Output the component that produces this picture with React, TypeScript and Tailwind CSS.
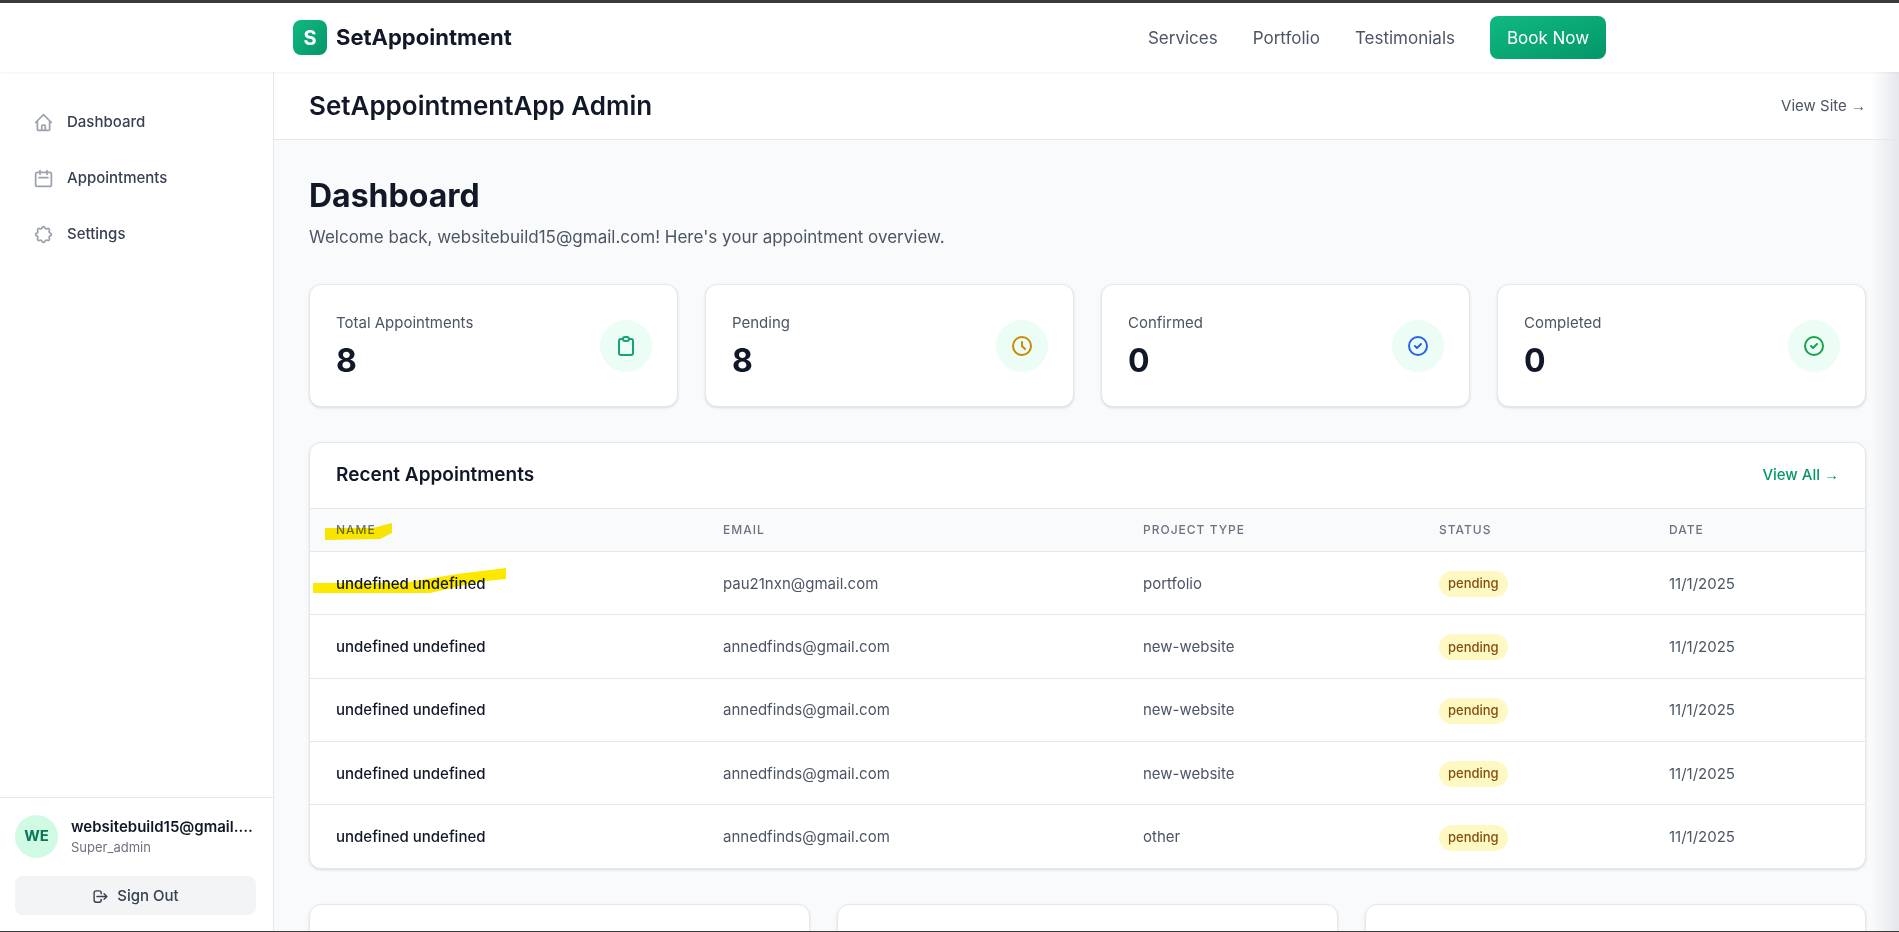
const stats = [
  { label: "Total Appointments", value: "8", icon: "clipboard", color: "text-[#16a37a]" },
  { label: "Pending", value: "8", icon: "clock", color: "text-[#ca8a04]" },
  { label: "Confirmed", value: "0", icon: "check", color: "text-[#2563eb]" },
  { label: "Completed", value: "0", icon: "check", color: "text-[#16a34a]" },
];

const rows = [
  { email: "pau21nxn@gmail.com", type: "portfolio" },
  { email: "annedfinds@gmail.com", type: "new-website" },
  { email: "annedfinds@gmail.com", type: "new-website" },
  { email: "annedfinds@gmail.com", type: "new-website" },
  { email: "annedfinds@gmail.com", type: "other" },
];

const iconPaths: Record<string, string> = {
  home: "M3 12l2-2m0 0l7-7 7 7M5 10v10a1 1 0 001 1h3m10-11l2 2m-2-2v10a1 1 0 01-1 1h-3m-6 0a1 1 0 001-1v-4a1 1 0 011-1h2a1 1 0 011 1v4a1 1 0 001 1m-6 0h6",
  calendar: "M8 7V3m8 4V3m-9 8h10M5 21h14a2 2 0 002-2V7a2 2 0 00-2-2H5a2 2 0 00-2 2v12a2 2 0 002 2z",
  gear: "M10.325 4.317c.426-1.756 2.924-1.756 3.35 0a1.724 1.724 0 002.573 1.066c1.543-.94 3.31.826 2.37 2.37a1.724 1.724 0 001.065 2.572c1.756.426 1.756 2.924 0 3.35a1.724 1.724 0 00-1.066 2.573c.94 1.543-.826 3.31-2.37 2.37a1.724 1.724 0 00-2.572 1.065c-.426 1.756-2.924 1.756-3.35 0a1.724 1.724 0 00-2.573-1.066c-1.543.94-3.31-.826-2.37-2.37a1.724 1.724 0 00-1.065-2.572c-1.756-.426-1.756-2.924 0-3.35a1.724 1.724 0 001.066-2.573c-.94-1.543.826-3.31 2.37-2.37.996.608 2.296.07 2.572-1.065z",
  logout: "M17 16l4-4m0 0l-4-4m4 4H7m6 4v1a3 3 0 01-3 3H6a3 3 0 01-3-3V7a3 3 0 013-3h4a3 3 0 013 3v1",
  clipboard: "M9 5H7a2 2 0 00-2 2v12a2 2 0 002 2h10a2 2 0 002-2V7a2 2 0 00-2-2h-2M9 5a2 2 0 002 2h2a2 2 0 002-2M9 5a2 2 0 012-2h2a2 2 0 012 2",
  clock: "M12 8v4l3 3m6-3a9 9 0 11-18 0 9 9 0 0118 0z",
  check: "M9 12l2 2 4-4m6 2a9 9 0 11-18 0 9 9 0 0118 0z",
};

function Icon({ name, size }: { name: string; size: number }) {
  return (
    <svg width={size} height={size} viewBox="0 0 24 24" fill="none" stroke="currentColor" strokeWidth="2" strokeLinecap="round" strokeLinejoin="round">
      <path d={iconPaths[name]} />
    </svg>
  );
}

function Arrow() {
  return <span className="font-['Liberation_Sans']">→</span>;
}

export default function App() {
  return (
    <div className="relative h-screen overflow-hidden flex flex-col bg-white font-['Inter',sans-serif] text-[#111827]">
      <div className="h-[3px] shrink-0 bg-[#3a3a3a]" />
      <header className="h-[69px] shrink-0 flex items-center justify-between pl-[293px] pr-[293px] bg-white shadow-[0_1px_2px_rgba(0,0,0,0.05)] z-10">
        <div className="flex items-center gap-[9px]">
          <div className="w-[34px] h-[35px] rounded-lg bg-gradient-to-br from-[#10b981] to-[#059669] flex items-center justify-center text-white font-bold text-[20px]">S</div>
          <span className="text-[22px] font-bold">SetAppointment</span>
        </div>
        <nav className="flex items-center gap-[35px] text-[17px] text-[#4b5563]">
          <span className="pt-[2px]">Services</span>
          <span className="pt-[2px]">Portfolio</span>
          <span className="pt-[2px]">Testimonials</span>
          <span className="w-[116px] h-[43px] pt-[2px] rounded-lg bg-gradient-to-br from-[#10b981] to-[#059669] text-white flex items-center justify-center">Book Now</span>
        </nav>
      </header>

      <div className="flex-1 min-h-0 flex">
        <aside className="w-[274px] shrink-0 border-r border-[#e5e7eb] flex flex-col">
          <nav className="flex-1 pt-[22px] flex flex-col text-[15px] font-medium text-[#374151]">
            {[
              { label: "Dashboard", icon: "home" },
              { label: "Appointments", icon: "calendar" },
              { label: "Settings", icon: "gear" },
            ].map((item) => (
              <div key={item.label} className="h-[56px] flex items-center gap-[13px] pl-[33px]">
                <span className="text-[#9ca3af]"><Icon name={item.icon} size={21} /></span>
                {item.label}
              </div>
            ))}
          </nav>
          <div className="h-[135px] border-t border-[#e5e7eb] pl-[15px] pr-[17px] pt-[17px]">
            <div className="flex items-center gap-[13px]">
              <div className="w-[43px] h-[43px] rounded-full bg-[#d1fae5] text-[#047857] flex items-center justify-center text-[15px] font-bold">WE</div>
              <div className="min-w-0 flex-1">
                <div className="text-[15px] font-semibold truncate">websitebuild15@gmail.com</div>
                <div className="text-[13px] text-[#6b7280]">Super_admin</div>
              </div>
            </div>
            <div className="mt-[18px] h-[39px] pt-[2px] rounded-lg bg-[#f3f4f6] text-[#374151] flex items-center justify-center gap-2 text-[15px] font-medium">
              <Icon name="logout" size={17} />
              Sign Out
            </div>
          </div>
        </aside>

        <main className="flex-1 min-w-0 bg-[#f9fafb] flex flex-col">
          <div className="h-[68px] shrink-0 bg-white border-b border-[#e5e7eb] flex items-center justify-between pl-[35px] pr-[33px]">
            <h1 className="text-[26px] font-semibold">SetAppointmentApp Admin</h1>
            <span className="pt-px text-[15px] text-[#4b5563]">View Site <Arrow /></span>
          </div>
          <div className="flex-1 min-h-0 pl-[35px] pr-[33px] pt-[36px]">
            <h2 className="text-[32px] font-bold leading-[40px]">Dashboard</h2>
            <p className="mt-[9px] text-[17px] leading-[24px] text-[#4b5563]">Welcome back, websitebuild15@gmail.com! Here's your appointment overview.</p>

            <div className="mt-[35px] grid grid-cols-4 gap-[27px]">
              {stats.map((s) => (
                <div key={s.label} className="h-[123px] rounded-xl bg-white border border-[#e5e7eb] shadow-sm flex items-center justify-between pl-[26px] pr-[25px]">
                  <div className="pt-[2px]">
                    <div className="text-[15px] leading-[20px] text-[#4b5563]">{s.label}</div>
                    <div className="mt-[8px] text-[32px] font-bold leading-[40px]">{s.value}</div>
                  </div>
                  <div className={`w-[52px] h-[52px] rounded-full bg-[#ecfdf5] flex items-center justify-center ${s.color}`}>
                    <Icon name={s.icon} size={24} />
                  </div>
                </div>
              ))}
            </div>

            <div className="mt-[35px] rounded-xl bg-white border border-[#e5e7eb] shadow-sm overflow-hidden">
              <div className="h-[65px] flex items-center justify-between px-[26px]">
                <h3 className="text-[19px] font-semibold">Recent Appointments</h3>
                <span className="text-[15px] font-medium text-[#059669]">View All <Arrow /></span>
              </div>
              <div className="h-[44px] grid grid-cols-[387px_420px_296px_230px_1fr] items-center px-[26px] bg-[#f9fafb] border-y border-[#e5e7eb] text-[12px] font-medium tracking-[1px] text-[#6b7280]">
                <span>NAME</span>
                <span>EMAIL</span>
                <span>PROJECT TYPE</span>
                <span>STATUS</span>
                <span>DATE</span>
              </div>
              {rows.map((r, i) => (
                <div key={i} className="h-[63.25px] pt-[2px] grid grid-cols-[387px_420px_296px_230px_1fr] items-center px-[26px] border-b border-[#e5e7eb] last:border-b-0 text-[15px] text-[#4b5563]">
                  <span className="font-medium text-[#111827]">undefined undefined</span>
                  <span>{r.email}</span>
                  <span>{r.type}</span>
                  <span>
                    <span className="inline-flex h-[26px] items-center rounded-full bg-[#fef9c3] px-[9px] text-[13px] font-medium text-[#854d0e]">pending</span>
                  </span>
                  <span>11/1/2025</span>
                </div>
              ))}
            </div>

            <div className="mt-[35px] grid grid-cols-3 gap-[27px]">
              {[0, 1, 2].map((c) => (
                <div key={c} className="h-[122px] rounded-xl bg-white border border-[#e5e7eb] shadow-sm pl-[30px] pt-[26px]">
                  <div className="w-[43px] h-[43px] rounded-lg bg-[#ecfdf5]" />
                </div>
              ))}
            </div>
          </div>
        </main>
      </div>

      {/* marker scribbles and window edge sit over the page */}
      <svg className="absolute inset-0 pointer-events-none mix-blend-multiply" width="1899" height="932" viewBox="0 0 1899 932">
        <path d="M325 528 L373 528 L392 523 L392 533 L380 539 L325 540 Z" fill="#fde900" />
        <path d="M313 583 L403 583 L457 574 L506 568 L506 579 L477 582 L430 593 L313 593 Z" fill="#fde900" />
      </svg>
      <div className="absolute right-0 top-[3px] bottom-px w-[28px] pointer-events-none bg-gradient-to-r from-transparent to-[#e5e7eb]" />
      <div className="absolute left-0 right-0 bottom-0 h-px bg-[#3a3a3a]" />
    </div>
  );
}
